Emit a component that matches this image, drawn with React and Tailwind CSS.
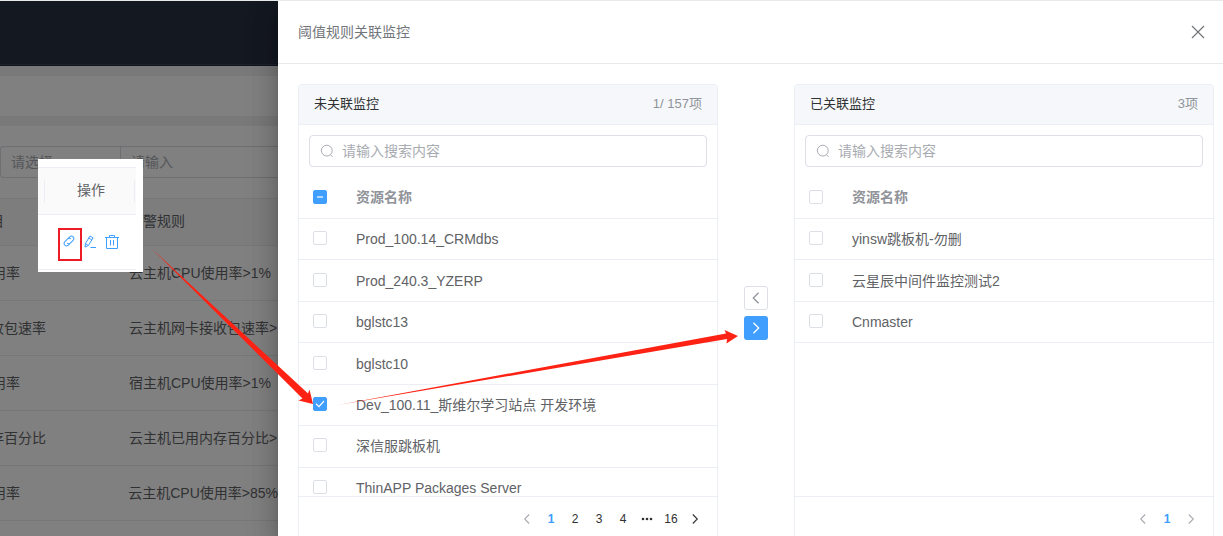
import React, { useState } from 'react';

const leftItems = [
    'Prod_100.14_CRMdbs',
    'Prod_240.3_YZERP',
    'bglstc13',
    'bglstc10',
    'Dev_100.11_斯维尔学习站点 开发环境',
    '深信服跳板机',
    'ThinAPP Packages Server',
];

const rightItems = ['yinsw跳板机-勿删', '云星辰中间件监控测试2', 'Cnmaster'];

const rules = [
    { metric: '用率', offset: '-ml-2', rule: '云主机CPU使用率>1%' },
    { metric: '收包速率', offset: '-ml-[10px]', rule: '云主机网卡接收包速率>' },
    { metric: '用率', offset: '-ml-2', rule: '宿主机CPU使用率>1%' },
    { metric: '存百分比', offset: '-ml-[10px]', rule: '云主机已用内存百分比>' },
    { metric: '用率', offset: '-ml-2', rule: '云主机CPU使用率>85%' },
];

const Chevron = ({ dir, className }) => (
    <svg viewBox="0 0 12 12" className={className} fill="none" stroke="currentColor" strokeWidth="1.1">
        <path d={dir === 'left' ? 'M8.2 1.5 3.7 6l4.5 4.5' : 'M3.8 1.5 8.3 6l-4.5 4.5'} />
    </svg>
);

const Checkbox = ({ state, onClick }) => (
    <span
        onClick={onClick}
        className={`flex size-3.5 shrink-0 items-center justify-center rounded-[2px] border ${
            state ? 'border-[#409eff] bg-[#409eff]' : 'border-[#dcdfe6] bg-white'
        }`}
    >
        {state === 'some' && <span className="h-0.5 w-1.5 bg-[#b3d8ff]" />}
        {state === 'checked' && (
            <svg viewBox="0 0 12 12" className="size-3 shrink-0" fill="none" stroke="white" strokeWidth="1.2">
                <path d="M2 5.8 5 8.6 10 3" />
            </svg>
        )}
    </span>
);

const Panel = ({ title, count, items, headState, checked, onToggle, children }) => (
    <div className="flex h-[460px] w-[420px] shrink-0 flex-col rounded border border-[#ebeef5] bg-white">
        <div className="flex h-10 shrink-0 items-center justify-between rounded-t border-b border-[#ebeef5] bg-[#f5f7fa] px-[15px] pb-px text-[13px]">
            <span className="text-[#303133]">{title}</span>
            <span className="text-[#909399]">{count}</span>
        </div>
        <div className="mx-2.5 mt-2.5 flex h-8 shrink-0 items-center rounded border border-[#dcdfe6] pl-2.5 text-sm text-[#a8abb2]">
            <svg viewBox="0 0 14 14" className="mr-2 size-3.5" fill="none" stroke="#a8abb2">
                <circle cx="6.8" cy="6.6" r="5.4" />
                <path d="m10.6 10.8 2 2" />
            </svg>
            请输入搜索内容
        </div>
        <div className="h-[330px] shrink-0 overflow-hidden border-b border-[#ebeef5] pt-[10px]">
            <div className="flex h-[42px] items-center border-b border-[#ebeef5] pb-0.5 pl-3.5">
                <Checkbox state={headState} />
                <span className="ml-[29px] text-sm font-bold text-[#909399]">资源名称</span>
            </div>
            {items.map((name) => (
                <div key={name} className="flex h-[41.45px] items-center border-b border-[#ebeef5] pl-3.5">
                    <div className="pb-0.5">
                        <Checkbox
                            state={checked.includes(name) ? 'checked' : ''}
                            onClick={() => onToggle(name)}
                        />
                    </div>
                    <span className="ml-[29px] text-sm text-[#606266]">{name}</span>
                </div>
            ))}
        </div>
        <div className="flex h-11 shrink-0 items-center justify-end pr-2.5 text-xs">{children}</div>
    </div>
);

const PageItem = ({ children, className = 'text-[#303133]' }) => (
    <span className={`flex h-6 w-6 items-center justify-center ${className}`}>{children}</span>
);

// Dimmed rule list that sits behind the drawer
const Backdrop = () => (
    <div className="h-full w-[278px] shrink-0 overflow-hidden bg-[#808080] text-sm whitespace-nowrap text-[#303133]">
        <div className="h-[65px] border-b border-[#11151c] bg-[#141820] pt-[63px]">
            <div className="h-px bg-[#1c212c]" />
        </div>
        <div className="h-2.5 bg-[#797979]" />
        <div className="h-10" />
        <div className="h-2.5 bg-[#797979]" />
        <div className="mt-5 flex h-8 rounded-l border border-r-0 border-[#6e6f73] text-[#545659]">
            <div className="flex w-[120px] items-center border-r border-[#6e6f73] pl-2.5">请选择</div>
            <div className="flex items-center pl-2.5">请输入</div>
        </div>
        <div className="mt-5 flex h-12 items-center border-y border-[#76777b] bg-[#7d7d7d] pb-0.5">
            <div className="w-[129px]">
                <div className="-ml-[10px]">目</div>
            </div>
            <div>告警规则</div>
        </div>
        {rules.map((row, i) => (
            <div key={i} className="flex h-[55px] items-center border-b border-[#76777b]">
                <div className="w-[129px]">
                    <div className={row.offset}>{row.metric}</div>
                </div>
                <div>{row.rule}</div>
            </div>
        ))}
    </div>
);

const ActionCallout = () => (
    <div className="absolute top-[158px] left-[38px] h-[113px] w-[105px] bg-white pt-2">
        <div className="flex h-12 w-[98px] items-center border-y border-[#ebeef5] bg-[#fafafa] pr-px pl-1.5">
            <div className="flex h-[23px] w-full items-center justify-center border-x border-[#ebeef5] pb-0.5 pl-[3px] text-sm text-[#606266]">
                操作
            </div>
        </div>
        <div className="flex h-[55px] w-[98px] items-center border-b border-[#ebeef5] pl-5 text-[#409eff]">
            <div className="mt-[5px] flex h-[33px] w-6 justify-center border-2 border-[#ed1c24] pt-[5px] pr-0.5">
                <svg viewBox="0 0 12 12" className="size-3" fill="none" stroke="currentColor">
                    <g transform="rotate(-45 6 6)">
                        <path d="M5 8.4H2.6A2.4 2.4 0 0 1 2.6 3.6h4A2.4 2.4 0 0 1 8.8 6" />
                        <path d="M7 3.6h2.4a2.4 2.4 0 0 1 0 4.8h-4A2.4 2.4 0 0 1 3.2 6" />
                    </g>
                </svg>
            </div>
            <svg viewBox="0 0 14 14" className="ml-px size-3.5" fill="none" stroke="currentColor">
                <path d="M2 12 2.4 8.6 7 1l3.1 1.9-4.7 7.6L2 12ZM5.8 3l3.1 1.9M2.4 8.6l3 1.9M7.5 12.5H13" />
            </svg>
            <svg viewBox="0 0 14 14" className="ml-2 size-3.5" fill="none" stroke="currentColor">
                <path d="M0 2.5h14M4.5 2.5v-2h5v2M1.5 2.5v11h11v-11M5.5 5v5.5M8.5 5v5.5" />
            </svg>
        </div>
    </div>
);

const App = () => {
    const [checked, setChecked] = useState(['Dev_100.11_斯维尔学习站点 开发环境']);
    const [assigned, setAssigned] = useState([]);

    const toggle = (list, setList) => (name) => {
        setList(list.includes(name) ? list.filter((n) => n !== name) : [...list, name]);
    };

    return (
        <div className="relative flex h-[536px] w-[1223px] overflow-hidden border-t border-[#e8e8e8] font-['Liberation_Sans','Noto_Sans_CJK_SC',sans-serif]">
            <Backdrop />

            {/* Drawer */}
            <div className="flex-1 bg-white shadow-[0_8px_10px_-5px_rgba(0,0,0,0.2),0_16px_24px_2px_rgba(0,0,0,0.14),0_6px_30px_5px_rgba(0,0,0,0.12)]">
                <div className="flex h-[63px] items-center justify-between border-b border-[#e8e8e8] pr-[18px] pl-5">
                    <span className="text-sm text-[#72767b]">阈值规则关联监控</span>
                    <svg viewBox="0 0 14 14" className="size-3.5" fill="none" stroke="#72767b" strokeWidth="1.2">
                        <path d="m1 1 12 12M13 1 1 13" />
                    </svg>
                </div>
                <div className="flex pt-5 pl-5">
                    <Panel
                        title="未关联监控"
                        count="1/ 157项"
                        items={leftItems}
                        headState={checked.length > 0 ? 'some' : ''}
                        checked={checked}
                        onToggle={toggle(checked, setChecked)}
                    >
                        <PageItem className="text-[#a8abb2]"><Chevron dir="left" className="size-3" /></PageItem>
                        <PageItem className="font-bold text-[#409eff]">1</PageItem>
                        <PageItem>2</PageItem>
                        <PageItem>3</PageItem>
                        <PageItem>4</PageItem>
                        <PageItem>
                            <svg viewBox="0 0 12 12" className="size-3" fill="currentColor">
                                <circle cx="2" cy="6" r="1.3" />
                                <circle cx="6" cy="6" r="1.3" />
                                <circle cx="10" cy="6" r="1.3" />
                            </svg>
                        </PageItem>
                        <PageItem>16</PageItem>
                        <PageItem><Chevron dir="right" className="size-3" /></PageItem>
                    </Panel>
                    <div className="flex w-[76px] shrink-0 flex-col items-center gap-1.5 pt-[202px]">
                        <button className="flex size-6 items-center justify-center rounded-[3px] border border-[#dcdfe6] text-[#909399]">
                            <Chevron dir="left" className="size-3.5 shrink-0" />
                        </button>
                        <button className="flex size-6 items-center justify-center rounded-[3px] bg-[#409eff] text-white">
                            <Chevron dir="right" className="size-3.5 shrink-0" />
                        </button>
                    </div>
                    <Panel
                        title="已关联监控"
                        count="3项"
                        items={rightItems}
                        headState=""
                        checked={assigned}
                        onToggle={toggle(assigned, setAssigned)}
                    >
                        <PageItem className="text-[#a8abb2]"><Chevron dir="left" className="size-3" /></PageItem>
                        <PageItem className="font-bold text-[#409eff]">1</PageItem>
                        <PageItem className="text-[#a8abb2]"><Chevron dir="right" className="size-3" /></PageItem>
                    </Panel>
                </div>
            </div>

            <ActionCallout />

            {/* Guide arrows */}
            <svg viewBox="0 0 1223 536" className="pointer-events-none absolute -top-px left-0 h-[536px] w-[1223px]" fill="#fe2214">
                <path d="M151 248 308 393.5l1.5-4L313 404l-14.5-3.5 4-2Z" />
                <path d="M338 405 726 333.5l-1.5-3.5L738 336l-11.5 7.5.5-4.5Z" />
            </svg>
        </div>
    );
};

export default App;
